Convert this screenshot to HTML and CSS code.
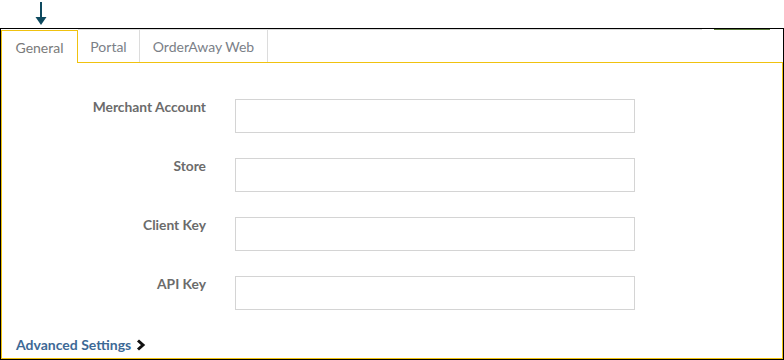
FILE: index.html
```html
<!DOCTYPE html>
<html>
<head>
<meta charset="utf-8">
<link rel="stylesheet" href="styles.css">
</head>
<body>
<div class="marker">
  <svg width="12" height="25" viewBox="0 0 12 25"><rect x="5" y="1" width="2" height="17" fill="#0e4a5f"/><polygon points="0.5,16 11.5,16 6,24" fill="#0e4a5f"/></svg>
</div>
<div class="frame">
  <div class="tabs">
    <div class="tab active">General</div>
    <div class="tab portal">Portal</div>
    <div class="tab oaw">OrderAway Web</div>
    <div class="filler"><span class="gray"></span><span class="green"></span></div>
  </div>
  <div class="panel">
    <div class="form">
      <div class="row"><label class="lbl">Merchant Account</label><div class="input"></div></div>
      <div class="row"><label class="lbl">Store</label><div class="input"></div></div>
      <div class="row"><label class="lbl">Client Key</label><div class="input"></div></div>
      <div class="row"><label class="lbl">API Key</label><div class="input"></div></div>
    </div>
    <div class="advanced">Advanced Settings
      <svg width="10" height="12" viewBox="0 0 10 12"><polyline points="2,1.5 7,6 2,10.5" fill="none" stroke="#111" stroke-width="3"/></svg>
    </div>
  </div>
</div>
</body>
</html>
```

FILE: styles.css
```css
html, body { margin: 0; padding: 0; background: #fff; }
body { width: 784px; height: 360px; overflow: hidden; font-family: Lato, "Open Sans", sans-serif; }
.marker { height: 28px; padding-left: 35px; box-sizing: border-box; padding-top: 1px; }
.marker svg { display: block; }
.frame { border: 1px solid #000; height: 332px; box-sizing: border-box; display: flex; flex-direction: column; }
.tabs { display: flex; height: 33px; }
.tab { box-sizing: border-box; height: 33px; border-top: 1px solid #dcdcdc; border-right: 1px solid #dcdcdc; font-size: 14px; color: #7b7f88; display: flex; align-items: center; justify-content: center; padding-top: 1px; }
.tab.active { width: 77px; height: 33px; margin-top: 1px; border: 1px solid #f0c20f; border-bottom: none; background: #fff; position: relative; z-index: 1; padding-top: 0; color: #7a7a7a; }
.tab.portal { width: 62px; }
.tab.oaw { width: 128px; }
.filler { flex: 1; display: flex; align-items: flex-start; }
.filler .gray { width: 434px; height: 1px; background: #d8d8d8; }
.filler .green { margin-left: 12px; width: 56px; height: 1px; background: #5a7a3a; }
.panel { flex: 1; border: 1px solid #f0c20f; margin-top: 0; display: flex; flex-direction: column; justify-content: space-between; }
.form { padding-top: 36px; display: flex; flex-direction: column; gap: 25px; }
.row { display: flex; align-items: flex-start; }
.lbl { width: 204px; text-align: right; font-size: 13.8px; font-weight: 700; color: #6b6b6b; line-height: 16px; }
.input { margin-left: 29px; width: 400px; height: 34px; box-sizing: border-box; border: 1px solid #d4d4d4; }
.advanced { padding-left: 14px; padding-bottom: 4px; font-size: 14px; font-weight: 700; color: #3d6996; display: flex; align-items: center; gap: 5px; line-height: 18px; }
.advanced svg { display: block; }
```
